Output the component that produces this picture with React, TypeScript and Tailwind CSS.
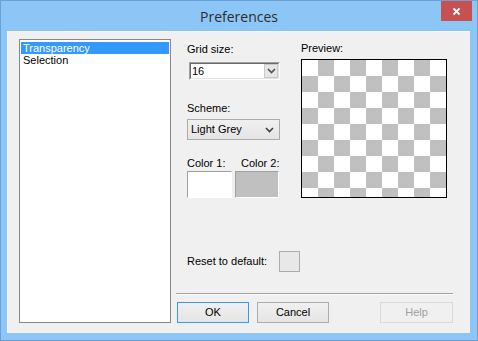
import React from "react";

const font = { fontFamily: "'Liberation Sans', Arial, sans-serif" };

function Chevron({ color = "#404040" }: { color?: string }) {
  return (
    <svg width="9" height="6" viewBox="0 0 9 6">
      <path d="M1 1 L4.5 4.5 L8 1" stroke={color} strokeWidth="1.6" fill="none" />
    </svg>
  );
}

function Checker() {
  const cells = [];
  for (let r = 0; r < 9; r++) {
    for (let c = 0; c < 9; c++) {
      const gray = (r + c) % 2 === 1;
      cells.push(
        <div key={r * 9 + c} className={gray ? "bg-[#c0c0c0]" : "bg-white"} />
      );
    }
  }
  return (
    <div className="w-[146px] h-[139px] border border-black overflow-hidden">
      <div className="grid grid-cols-[repeat(9,16px)] grid-rows-[repeat(9,16px)] w-[144px]">{cells}</div>
    </div>
  );
}

export default function App() {
  return (
    <div
      className="w-[478px] h-[341px] bg-[#8cc6f7] border border-[#6f9fd2] flex flex-col text-[11px] text-black"
      style={font}
    >
      <div className="h-[29px] relative flex items-center justify-center">
        <span
          className="text-[14px] text-[#2d2d2d] mt-[2px]"
          style={{ fontFamily: "'Open Sans', 'Noto Sans', sans-serif" }}
        >
          Preferences
        </span>
        <div className="absolute right-[5px] top-0 w-[31px] h-[20px] bg-[#c75050] flex items-center justify-center">
          <svg width="9" height="9" viewBox="0 0 9 9">
            <path d="M1.5 1.5 L7.5 7.5 M7.5 1.5 L1.5 7.5" stroke="white" strokeWidth="1.8" />
          </svg>
        </div>
      </div>
      <div className="ml-[6px] mt-[1px] w-[463px] h-[302px] bg-[#f0f0f0] border-l border-t border-[#f7f7f7] flex pl-[11px] pt-[7px]">
        {/* list */}
        <div className="w-[152px] h-[284px] border border-[#828790] bg-white pt-[2px] px-[1px]">
          <div className="h-[12px] leading-[12px] bg-[#3399ff] text-white pl-[2px]">Transparency</div>
          <div className="h-[13px] leading-[13px] pl-[2px]">Selection</div>
        </div>
        {/* right */}
        <div className="ml-[5px] w-[277px] flex flex-col">
          <div className="flex h-[159px]">
            <div className="ml-[11px] w-[103px] flex flex-col">
              <div className="mt-[4px] h-[13px] leading-[13px]">Grid size:</div>
              <div className="mt-[6px] ml-[2px] w-[91px] h-[18px] border-t border-l border-[#a0a0a0] border-b border-r border-b-white border-r-white">
                <div className="w-full h-full border-t border-l border-[#696969] border-b border-r border-b-[#e3e3e3] border-r-[#e3e3e3] bg-white flex items-center">
                  <span className="pl-[1px] flex-1">16</span>
                  <div className="w-[14px] h-[14px] bg-[#e6e6e6] border border-[#c8c8c8] flex items-center justify-center">
                    <Chevron color="#505050" />
                  </div>
                </div>
              </div>
              <div className="mt-[22px] h-[13px] leading-[13px]">Scheme:</div>
              <div className="mt-[4px] w-[93px] h-[21px] border border-[#acacac] bg-gradient-to-b from-[#f0f0f0] to-[#e5e5e5] flex items-center pl-[3px] pr-[5px]">
                <span className="flex-1">Light Grey</span>
                <Chevron color="#404040" />
              </div>
              <div className="mt-[17px] h-[13px] leading-[13px] flex">
                <span className="w-[54px]">Color 1:</span>
                <span>Color 2:</span>
              </div>
              <div className="mt-[1px] flex gap-[3px]">
                <div className="w-[45px] h-[27px] border-t border-l border-[#a0a0a0] border-b border-r border-b-white border-r-white bg-white" />
                <div className="w-[44px] h-[27px] border-t border-l border-[#a0a0a0] border-b border-r border-b-white border-r-white bg-[#c0c0c0]" />
              </div>
            </div>
            <div className="ml-[11px] flex flex-col">
              <div className="mt-[3px] h-[13px] leading-[13px]">Preview:</div>
              <div className="mt-[4px]">
                <Checker />
              </div>
            </div>
          </div>
          <div className="mt-[53px] ml-[11px] h-[21px] flex items-center">
            <span className="w-[92px]">Reset to default:</span>
            <div className="w-[21px] h-[21px] border border-[#acacac] bg-[#e8e8e8]" />
          </div>
          <div className="mt-[21px] h-[2px] w-[277px] border-t border-[#a0a0a0] border-b border-b-white" />
          <div className="mt-[7px] flex">
            <div className="ml-[1px] w-[72px] h-[21px] border border-[#3399ff] bg-gradient-to-b from-[#f0f0f0] to-[#e5e5e5] flex items-center justify-center">OK</div>
            <div className="ml-[8px] w-[72px] h-[21px] border border-[#acacac] bg-gradient-to-b from-[#f0f0f0] to-[#e5e5e5] flex items-center justify-center">Cancel</div>
            <div className="ml-[51px] w-[73px] h-[21px] border border-[#d9d9d9] bg-[#f0f0f0] text-[#a0a0a0] flex items-center justify-center">Help</div>
          </div>
        </div>
      </div>
    </div>
  );
}
